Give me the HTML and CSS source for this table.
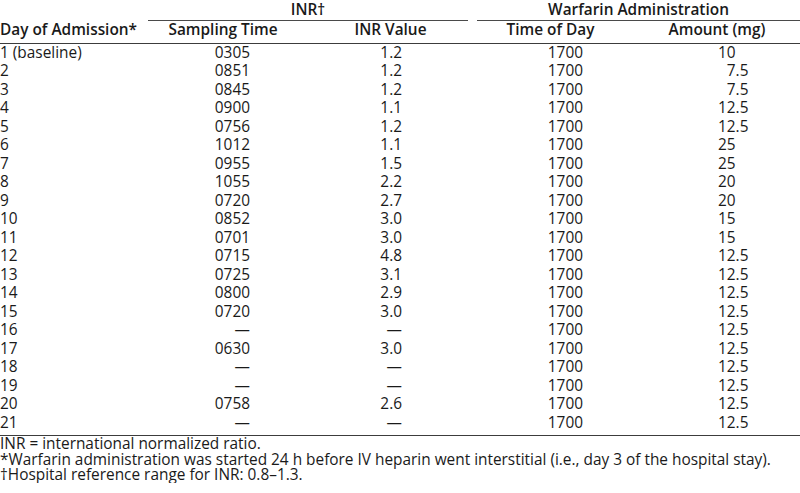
FILE: index.html
```html
<!DOCTYPE html>
<html lang="en">
<head>
<meta charset="utf-8">
<title>INR and Warfarin Administration</title>
<link rel="stylesheet" href="styles.css">
</head>
<body>
<div class="table">
  <div class="row groups">
    <div class="grp grp-inr">INR†</div>
    <div class="grp grp-warf">Warfarin Administration</div>
  </div>
  <div class="row heads">
    <div class="h h-day">Day of Admission*</div>
    <div class="h h-samp">Sampling Time</div>
    <div class="h h-inr">INR Value</div>
    <div class="h h-tod">Time of Day</div>
    <div class="h h-amt">Amount (mg)</div>
  </div>
  <div class="body">
    <div class="row"><div class="c-day">1 (baseline)</div><div class="c-samp">0305</div><div class="c-inr">1.2</div><div class="c-tod">1700</div><div class="c-amt">10</div></div>
    <div class="row"><div class="c-day">2</div><div class="c-samp">0851</div><div class="c-inr">1.2</div><div class="c-tod">1700</div><div class="c-amt pad">7.5</div></div>
    <div class="row"><div class="c-day">3</div><div class="c-samp">0845</div><div class="c-inr">1.2</div><div class="c-tod">1700</div><div class="c-amt pad">7.5</div></div>
    <div class="row"><div class="c-day">4</div><div class="c-samp">0900</div><div class="c-inr">1.1</div><div class="c-tod">1700</div><div class="c-amt">12.5</div></div>
    <div class="row"><div class="c-day">5</div><div class="c-samp">0756</div><div class="c-inr">1.2</div><div class="c-tod">1700</div><div class="c-amt">12.5</div></div>
    <div class="row"><div class="c-day">6</div><div class="c-samp">1012</div><div class="c-inr">1.1</div><div class="c-tod">1700</div><div class="c-amt">25</div></div>
    <div class="row"><div class="c-day">7</div><div class="c-samp">0955</div><div class="c-inr">1.5</div><div class="c-tod">1700</div><div class="c-amt">25</div></div>
    <div class="row"><div class="c-day">8</div><div class="c-samp">1055</div><div class="c-inr">2.2</div><div class="c-tod">1700</div><div class="c-amt">20</div></div>
    <div class="row"><div class="c-day">9</div><div class="c-samp">0720</div><div class="c-inr">2.7</div><div class="c-tod">1700</div><div class="c-amt">20</div></div>
    <div class="row"><div class="c-day">10</div><div class="c-samp">0852</div><div class="c-inr">3.0</div><div class="c-tod">1700</div><div class="c-amt">15</div></div>
    <div class="row"><div class="c-day">11</div><div class="c-samp">0701</div><div class="c-inr">3.0</div><div class="c-tod">1700</div><div class="c-amt">15</div></div>
    <div class="row"><div class="c-day">12</div><div class="c-samp">0715</div><div class="c-inr">4.8</div><div class="c-tod">1700</div><div class="c-amt">12.5</div></div>
    <div class="row"><div class="c-day">13</div><div class="c-samp">0725</div><div class="c-inr">3.1</div><div class="c-tod">1700</div><div class="c-amt">12.5</div></div>
    <div class="row"><div class="c-day">14</div><div class="c-samp">0800</div><div class="c-inr">2.9</div><div class="c-tod">1700</div><div class="c-amt">12.5</div></div>
    <div class="row"><div class="c-day">15</div><div class="c-samp">0720</div><div class="c-inr">3.0</div><div class="c-tod">1700</div><div class="c-amt">12.5</div></div>
    <div class="row"><div class="c-day">16</div><div class="c-samp">—</div><div class="c-inr">—</div><div class="c-tod">1700</div><div class="c-amt">12.5</div></div>
    <div class="row"><div class="c-day">17</div><div class="c-samp">0630</div><div class="c-inr">3.0</div><div class="c-tod">1700</div><div class="c-amt">12.5</div></div>
    <div class="row"><div class="c-day">18</div><div class="c-samp">—</div><div class="c-inr">—</div><div class="c-tod">1700</div><div class="c-amt">12.5</div></div>
    <div class="row"><div class="c-day">19</div><div class="c-samp">—</div><div class="c-inr">—</div><div class="c-tod">1700</div><div class="c-amt">12.5</div></div>
    <div class="row"><div class="c-day">20</div><div class="c-samp">0758</div><div class="c-inr">2.6</div><div class="c-tod">1700</div><div class="c-amt">12.5</div></div>
    <div class="row"><div class="c-day">21</div><div class="c-samp">—</div><div class="c-inr">—</div><div class="c-tod">1700</div><div class="c-amt">12.5</div></div>
  </div>
</div>
<div class="notes">
  <p>INR = international normalized ratio.</p>
  <p>*Warfarin administration was started 24 h before IV heparin went interstitial (i.e., day 3 of the hospital stay).</p>
  <p>†Hospital reference range for INR: 0.8–1.3.</p>
</div>
</body>
</html>
```

FILE: styles.css
```css
html, body {
  margin: 0;
  padding: 0;
  background: #ffffff;
}

body {
  font-family: "Open Sans", "Noto Sans", "Liberation Sans", sans-serif;
  font-size: 15.4px;
  line-height: 18.5px;
  color: #1a1a1a;
  width: 800px;
}

.row {
  display: grid;
  grid-template-columns: 148px 160px 164.5px 165.5px 162px;
  white-space: nowrap;
}

.groups {
  padding-top: 1.25px;
}

.groups .grp {
  font-weight: 600;
  text-align: center;
  border-bottom: 1px solid #4a4a4a;
}

.grp-inr {
  grid-column: 2 / 4;
  margin-right: 4.5px;
}

.grp-warf {
  grid-column: 4 / 6;
  margin-left: 4.5px;
}

.heads {
  padding-bottom: 3.5px;
  border-bottom: 1.5px solid #3c3c3c;
}

.h {
  font-weight: 600;
  text-align: center;
}

.h-day { text-align: left; }
.h-samp { padding-right: 10px; }
.h-inr { padding-left: 0.5px; }
.h-tod { padding-right: 9.5px; }
.h-amt { padding-right: 4px; }

.body {
  padding-bottom: 3px;
  border-bottom: 1.5px solid #3c3c3c;
}

.c-samp {
  text-align: right;
  padding-right: 58px;
}

.c-inr {
  text-align: right;
  padding-right: 70.5px;
}

.c-tod {
  text-align: right;
  padding-right: 55px;
}

.c-amt {
  text-align: left;
  padding-left: 80px;
}

.c-amt.pad {
  padding-left: calc(80px + 0.5718em);
}

.notes {
  line-height: 15.5px;
}

.notes p {
  margin: 0;
  white-space: nowrap;
}
```
